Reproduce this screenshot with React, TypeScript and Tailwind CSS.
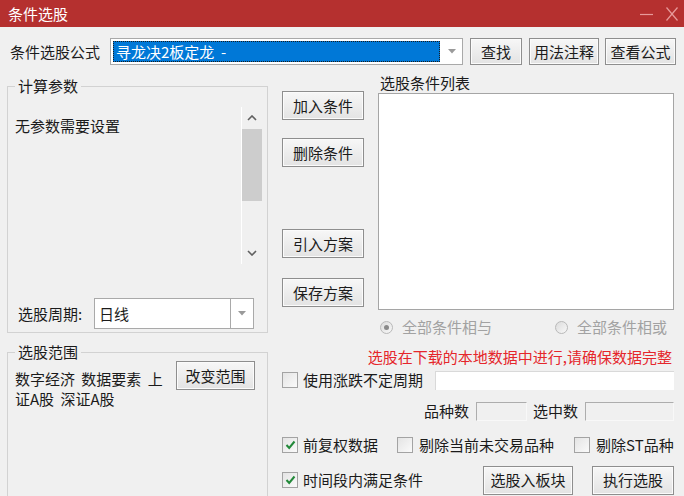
import React from "react";

function Btn({ children, className = "" }: { children: React.ReactNode; className?: string }) {
  return (
    <div
      className={`flex items-center justify-center border border-[#8e8e8e] bg-gradient-to-b from-[#f7f7f7] to-[#e3e3e3] shadow-[inset_0_0_0_1px_#fbfbfb] text-[#1b1b1b] ${className}`}
    >
      {children}
    </div>
  );
}

function Check({ checked = false }: { checked?: boolean }) {
  return (
    <div className="w-[16px] h-[16px] border border-[#a3a3a3] bg-gradient-to-br from-[#e4e4e4] to-[#fafafa] flex items-center justify-center shrink-0">
      {checked && (
        <svg width="11" height="10" viewBox="0 0 11 10">
          <polyline points="1.5,5 4.2,8 9.5,1.5" fill="none" stroke="#23893a" strokeWidth="2" />
        </svg>
      )}
    </div>
  );
}

function Radio({ dot = false }: { dot?: boolean }) {
  return (
    <div className="w-[13px] h-[13px] rounded-full border border-[#b9b9b9] bg-gradient-to-br from-[#dcdcdc] to-[#f8f8f8] flex items-center justify-center shrink-0">
      {dot && <div className="w-[5px] h-[5px] rounded-full bg-[#8a8a8a]" />}
    </div>
  );
}

function Arrow() {
  return (
    <svg width="8" height="5" viewBox="0 0 8 5">
      <polygon points="0,0 8,0 4,4.5" fill="#9a9a9a" />
    </svg>
  );
}

function Chevron({ up }: { up?: boolean }) {
  return (
    <svg width="10" height="6" viewBox="0 0 10 6">
      <polyline
        points={up ? "1,5 5,1 9,5" : "1,1 5,5 9,1"}
        fill="none"
        stroke="#606060"
        strokeWidth="1.6"
      />
    </svg>
  );
}

export default function App() {
  return (
    <div className="w-[684px] h-[496px] bg-[#f0f0f0] overflow-hidden flex flex-col text-[15px] leading-[20px] text-[#1b1b1b] font-['Microsoft_YaHei','Noto_Sans_CJK_SC',sans-serif]">
      {/* title bar */}
      <div className="h-[27px] shrink-0 bg-[#b5302f] flex items-center pl-[8px] pr-[6px] text-white">
        <span>条件选股</span>
        <div className="ml-auto flex items-center gap-[13px]">
          <svg width="13" height="14" viewBox="0 0 13 14">
            <line x1="0" y1="7.5" x2="13" y2="7.5" stroke="#e79a9a" strokeWidth="1.2" />
          </svg>
          <svg width="12" height="14" viewBox="0 0 12 14">
            <line x1="0.5" y1="0.5" x2="11.5" y2="13.5" stroke="#e79a9a" strokeWidth="1.2" />
            <line x1="11.5" y1="0.5" x2="0.5" y2="13.5" stroke="#e79a9a" strokeWidth="1.2" />
          </svg>
        </div>
      </div>

      {/* formula row */}
      <div className="flex items-center h-[27px] mt-[11px] pl-[10px] shrink-0">
        <span className="w-[100px]">条件选股公式</span>
        <div className="w-[353px] h-[27px] bg-white border border-[#a9a9a9] flex items-stretch">
          <div className="flex-1 m-[2px] bg-[#0078d7] border border-dotted border-[#1c1c1c] text-white flex items-center pl-[2px] whitespace-pre">
            寻龙决2板定龙  -
          </div>
          <div className="w-[20px] flex items-center justify-center">
            <Arrow />
          </div>
        </div>
        <Btn className="ml-[7px] w-[52px] h-[27px]">查找</Btn>
        <Btn className="ml-[7px] w-[70px] h-[27px]">用法注释</Btn>
        <Btn className="ml-[6px] w-[71px] h-[27px]">查看公式</Btn>
      </div>

      {/* main */}
      <div className="flex flex-1 min-h-0">
        {/* left column */}
        <div className="ml-[7px] w-[261px] flex flex-col">
          <fieldset className="mt-[11px] h-[257px] border border-[#d2d2d2] flex flex-col">
            <legend className="ml-[7px] px-[3px]">计算参数</legend>
            <div className="flex h-[157px] mt-[11px]">
              <div className="flex-1 pl-[7px] pt-[9px]">无参数需要设置</div>
              <div className="w-[21px] mr-[5px] border-l border-white flex flex-col">
                <div className="h-[22px] flex items-center justify-center">
                  <Chevron up />
                </div>
                <div className="h-[72px] bg-[#cdcdcd]" />
                <div className="flex-1" />
                <div className="h-[22px] flex items-center justify-center">
                  <Chevron />
                </div>
              </div>
            </div>
            <div className="flex items-center mt-[34px] pl-[10px]">
              <span className="w-[76px]">选股周期:</span>
              <div className="w-[160px] h-[31px] bg-white border border-[#a9a9a9] flex">
                <div className="flex-1 flex items-center pl-[4px]">日线</div>
                <div className="w-[23px] border-l border-[#a9a9a9] flex items-center justify-center">
                  <Arrow />
                </div>
              </div>
            </div>
          </fieldset>

          <fieldset className="mt-[9px] flex-1 border border-[#d2d2d2] border-b-0">
            <legend className="ml-[7px] px-[3px]">选股范围</legend>
            <div className="flex items-start -mt-[1px]">
              <div className="w-[168px] pl-[7px] pr-[6px] pt-[8px] [word-spacing:3px]">数字经济 数据要素 上证A股 深证A股</div>
              <Btn className="w-[79px] h-[29px]">改变范围</Btn>
            </div>
          </fieldset>
        </div>

        {/* right column */}
        <div className="ml-[14px] w-[392px] flex flex-col">
          <div className="flex">
            <div className="w-[82px] flex flex-col">
              <Btn className="mt-[26px] h-[29px]">加入条件</Btn>
              <Btn className="mt-[18px] h-[29px]">删除条件</Btn>
              <Btn className="mt-[62px] h-[29px]">引入方案</Btn>
              <Btn className="mt-[20px] h-[29px]">保存方案</Btn>
            </div>
            <div className="ml-[14px] w-[296px] flex flex-col">
              <div className="mt-[8px] pl-[2px]">选股条件列表</div>
              <div className="h-[217px] bg-white border border-[#a5a5a5]" />
            </div>
          </div>

          <div className="flex items-center h-[20px] mt-[7px] text-[#a2a2a2]">
            <div className="ml-[98px]">
              <Radio dot />
            </div>
            <span className="ml-[9px]">全部条件相与</span>
            <div className="ml-[63px]">
              <Radio />
            </div>
            <span className="ml-[9px]">全部条件相或</span>
          </div>

          <div className="h-[20px] mt-[10px] text-right pr-[2px] text-[#e5262b]">
            选股在下载的本地数据中进行,请确保数据完整
          </div>

          <div className="flex items-center h-[20px] mt-[3px]">
            <Check />
            <span className="ml-[5px]">使用涨跌不定周期</span>
            <div className="ml-auto w-[239px] h-[19px] bg-white border-l border-t border-[#d9d9d9]" />
          </div>

          <div className="flex items-center justify-end h-[20px] mt-[11px]">
            <span>品种数</span>
            <div className="ml-[7px] w-[51px] h-[19px] border-l border-t border-[#adadad] border-r border-b border-r-[#f8f8f8] border-b-[#f8f8f8]" />
            <span className="ml-[6px]">选中数</span>
            <div className="ml-[7px] w-[89px] h-[19px] border-l border-t border-[#adadad] border-r border-b border-r-[#f8f8f8] border-b-[#f8f8f8]" />
          </div>

          <div className="flex items-center h-[20px] mt-[14px]">
            <Check checked />
            <span className="ml-[5px]">前复权数据</span>
            <div className="ml-[19px]">
              <Check />
            </div>
            <span className="ml-[6px]">剔除当前未交易品种</span>
            <div className="ml-[20px]">
              <Check />
            </div>
            <span className="ml-[6px]">剔除ST品种</span>
          </div>

          <div className="flex items-center h-[30px] mt-[10px]">
            <Check checked />
            <span className="ml-[5px]">时间段内满足条件</span>
            <Btn className="ml-auto w-[90px] h-[29px]">选股入板块</Btn>
            <Btn className="ml-[19px] w-[82px] h-[29px]">执行选股</Btn>
          </div>
        </div>
      </div>
    </div>
  );
}
